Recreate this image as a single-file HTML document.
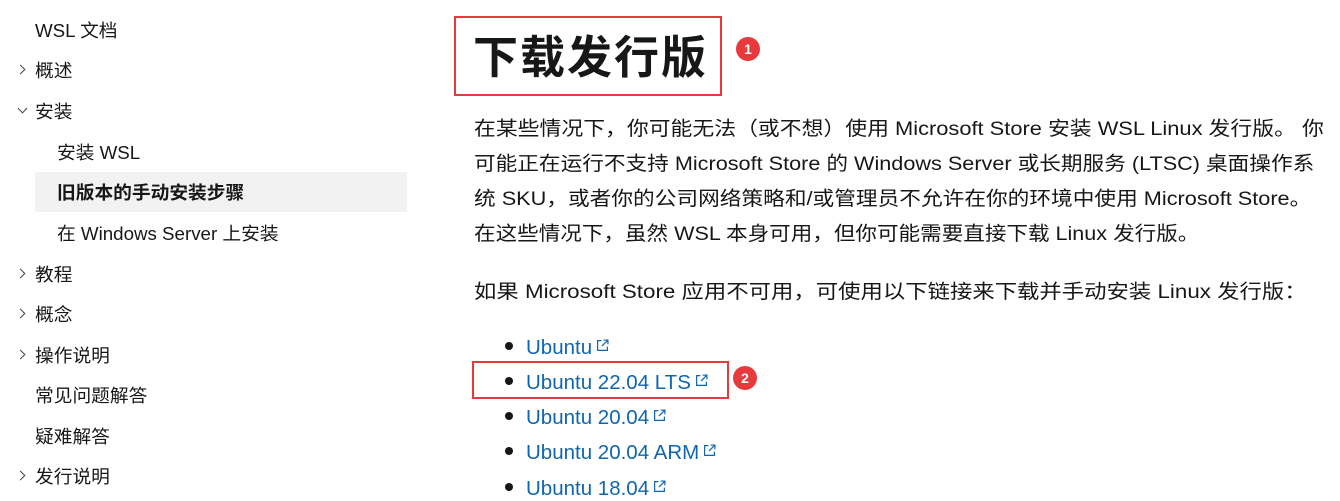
<!DOCTYPE html>
<html><head><meta charset="utf-8"><style>
*{margin:0;padding:0;box-sizing:border-box}
body{width:1340px;height:501px;background:#fff;position:relative;overflow:hidden;font-family:"Liberation Sans","Noto Sans CJK SC",sans-serif;color:#171717}
.a{position:absolute;white-space:nowrap;line-height:24px}
.s{font-size:18px;transform:translateY(-11px) scaleX(1.04);transform-origin:left center}
.chev{position:absolute;width:7px;height:7px;border-right:1.3px solid #444;border-bottom:1.3px solid #444}
.p{font-size:19.5px;left:474px;transform-origin:left center}
.l{font-size:20.5px;left:526px;color:#0f65b0;transform:translateY(-10px)}
.dot{position:absolute;left:505px;width:8px;height:8px;border-radius:50%;background:#171717}
.ext{display:inline-block;vertical-align:2px;margin-left:4px}
.badge{position:absolute;width:24px;height:24px;border-radius:50%;background:#e8393c;color:#fff;font-size:14px;text-align:center;line-height:24px;font-weight:bold}
.box{position:absolute;border:2.5px solid #e8393c}
</style></head><body>
<div style="position:absolute;left:35px;top:172px;width:372px;height:40px;background:#f2f2f2"></div>
<div class="a s" style="left:35px;top:30px">WSL 文档</div>
<div class="chev" style="left:17px;top:66px;transform:rotate(-45deg)"></div><div class="a s" style="left:35px;top:70px">概述</div>
<div class="chev" style="left:19px;top:105px;transform:rotate(45deg)"></div><div class="a s" style="left:35px;top:111px">安装</div>
<div class="a s" style="left:57px;top:152px">安装 WSL</div>
<div class="a s" style="left:57px;top:192px;font-weight:bold">旧版本的手动安装步骤</div>
<div class="a s" style="left:57px;top:233px">在 Windows Server 上安装</div>
<div class="chev" style="left:17px;top:270px;transform:rotate(-45deg)"></div><div class="a s" style="left:35px;top:274px">教程</div>
<div class="chev" style="left:17px;top:310px;transform:rotate(-45deg)"></div><div class="a s" style="left:35px;top:314px">概念</div>
<div class="chev" style="left:17px;top:351px;transform:rotate(-45deg)"></div><div class="a s" style="left:35px;top:355px">操作说明</div>
<div class="a s" style="left:35px;top:395px">常见问题解答</div>
<div class="a s" style="left:35px;top:436px">疑难解答</div>
<div class="chev" style="left:17px;top:472px;transform:rotate(-45deg)"></div><div class="a s" style="left:35px;top:476px">发行说明</div>

<div class="box" style="left:454px;top:16px;width:268px;height:80px"></div>
<div class="a" style="left:473px;top:30px;font-size:45px;line-height:56px;font-weight:bold;letter-spacing:2px">下载发行版</div>
<div class="badge" style="left:736px;top:37px">1</div>

<div class="a p" style="top:127px;transform:translateY(-10px) scaleX(1.12)">在某些情况下，你可能无法（或不想）使用 Microsoft Store 安装 WSL Linux 发行版。 你</div>
<div class="a p" style="top:162px;transform:translateY(-10px) scaleX(1.11)">可能正在运行不支持 Microsoft Store 的 Windows Server 或长期服务 (LTSC) 桌面操作系</div>
<div class="a p" style="top:197px;transform:translateY(-10px) scaleX(1.112)">统 SKU，或者你的公司网络策略和/或管理员不允许在你的环境中使用 Microsoft Store。</div>
<div class="a p" style="top:232px;transform:translateY(-10px) scaleX(1.106)">在这些情况下，虽然 WSL 本身可用，但你可能需要直接下载 Linux 发行版。</div>
<div class="a p" style="top:290px;transform:translateY(-10px) scaleX(1.147)">如果 Microsoft Store 应用不可用，可使用以下链接来下载并手动安装 Linux 发行版：</div>

<div class="box" style="left:472px;top:361px;width:257px;height:38px"></div>
<div class="badge" style="left:733px;top:366px">2</div>
<svg width="0" height="0" style="position:absolute"><defs><symbol id="e" viewBox="0 0 12 12"><path d="M5 1.5H1.5v9h9V7M7 1h4v4M11 1L5.5 6.5" fill="none" stroke="#0f65b0" stroke-width="1.1"/></symbol></defs></svg>
<div class="dot" style="top:342px"></div><div class="a l" style="top:346px">Ubuntu<svg class="ext" width="13" height="13"><use href="#e"/></svg></div>
<div class="dot" style="top:377px"></div><div class="a l" style="top:381px">Ubuntu 22.04 LTS<svg class="ext" width="13" height="13"><use href="#e"/></svg></div>
<div class="dot" style="top:412px"></div><div class="a l" style="top:416px">Ubuntu 20.04<svg class="ext" width="13" height="13"><use href="#e"/></svg></div>
<div class="dot" style="top:447px"></div><div class="a l" style="top:451px">Ubuntu 20.04 ARM<svg class="ext" width="13" height="13"><use href="#e"/></svg></div>
<div class="dot" style="top:483px"></div><div class="a l" style="top:487px">Ubuntu 18.04<svg class="ext" width="13" height="13"><use href="#e"/></svg></div>
</body></html>
